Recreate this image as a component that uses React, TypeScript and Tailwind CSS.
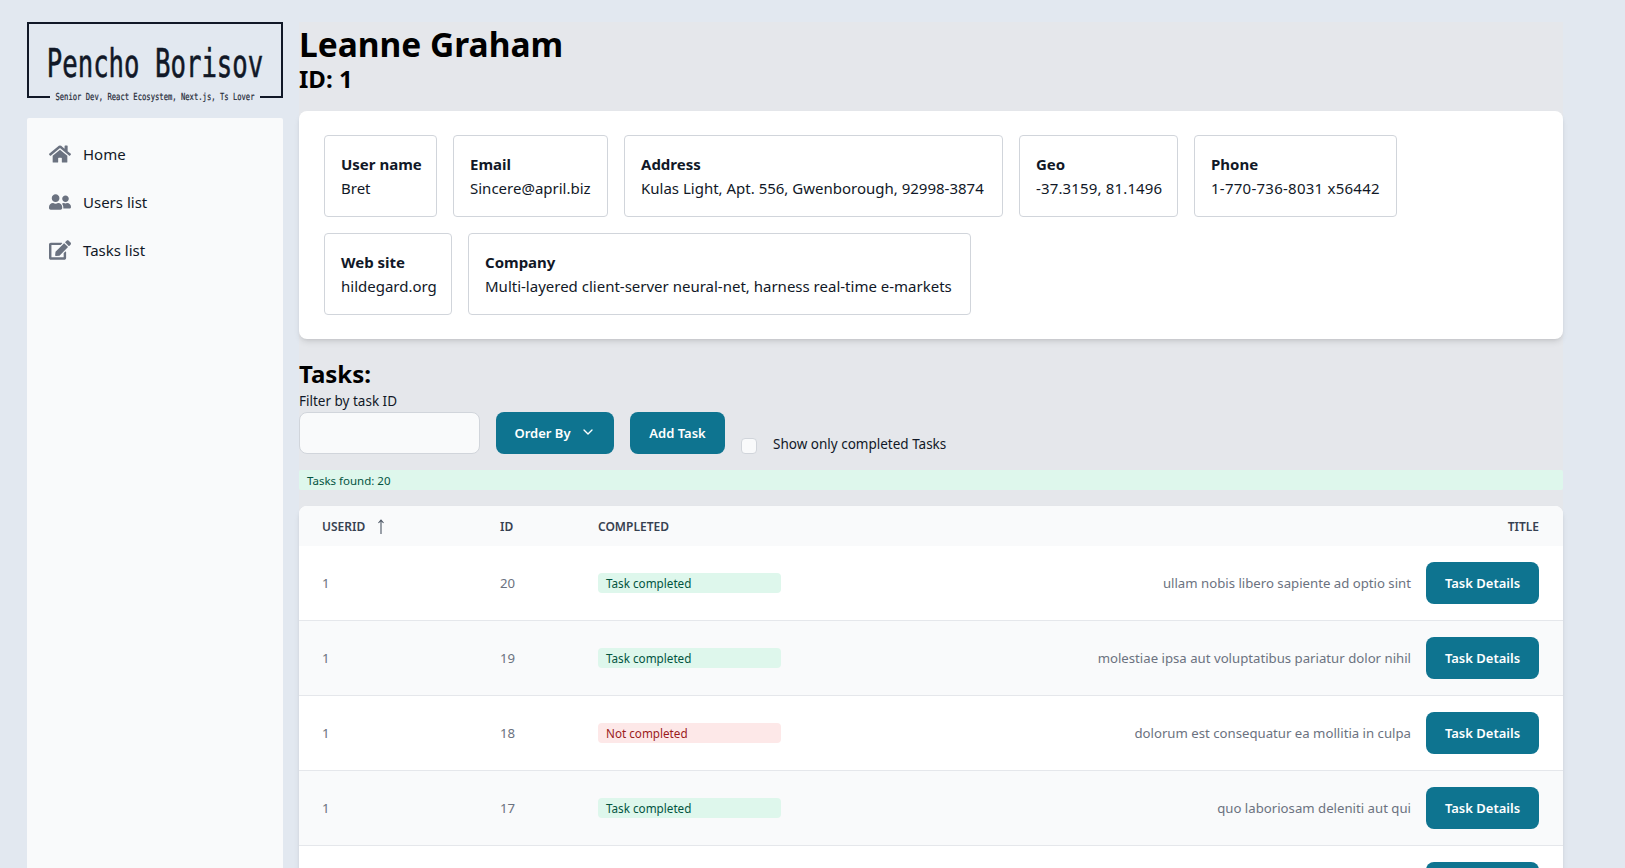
import React from 'react';
import { FaHome, FaUserFriends, FaEdit } from 'react-icons/fa';
import { ChevronDown } from 'lucide-react';

const font = { fontFamily: '"Noto Sans", sans-serif' };

const userFields = [
  [
    { label: 'User name', value: 'Bret', box: 'w-[113px]', val: '' },
    { label: 'Email', value: 'Sincere@april.biz', box: 'w-[155px]', val: '' },
    { label: 'Address', value: 'Kulas Light, Apt. 556, Gwenborough, 92998-3874', box: 'w-[379px]', val: '' },
    { label: 'Geo', value: '-37.3159, 81.1496', box: 'w-[159px]', val: 'tracking-[0.15px]' },
    { label: 'Phone', value: '1-770-736-8031 x56442', box: 'w-[203px]', val: 'tracking-[0.25px]' },
  ],
  [
    { label: 'Web site', value: 'hildegard.org', box: 'w-[128px]', val: '' },
    { label: 'Company', value: 'Multi-layered client-server neural-net, harness real-time e-markets', box: 'w-[503px]', val: '' },
  ],
];

const tasks = [
  { id: 20, done: true, title: 'ullam nobis libero sapiente ad optio sint' },
  { id: 19, done: true, title: 'molestiae ipsa aut voluptatibus pariatur dolor nihil' },
  { id: 18, done: false, title: 'dolorum est consequatur ea mollitia in culpa' },
  { id: 17, done: true, title: 'quo laboriosam deleniti aut qui' },
  { id: 16, done: true, title: 'sunt cum tempora' },
];

const Logo = () => (
  <div className="h-[76px] border-2 border-b-0 border-[#111827] flex flex-col items-center justify-between">
    <div className="mt-[29px] text-[25.7px] leading-[20px] scale-y-[1.5] text-[#111827] [-webkit-text-stroke:0.4px_#111827] font-['DejaVu_Sans_Mono',monospace] whitespace-nowrap">
      Pencho Borisov
    </div>
    <div className="flex items-center w-full h-[4px] gap-[5px] -mb-[1px]">
      <span className="h-[2px] flex-1 bg-[#111827]" />
      <span className="text-[7.2px] leading-[10px] scale-y-[1.35] text-[#1f2937] [-webkit-text-stroke:0.15px_#1f2937] font-['DejaVu_Sans_Mono',monospace] whitespace-nowrap">
        Senior Dev, React Ecosystem, Next.js, Ts Lover
      </span>
      <span className="h-[2px] flex-1 bg-[#111827]" />
    </div>
  </div>
);

const NavItem = ({ icon, label }: { icon: React.ReactNode; label: string }) => (
  <a className="flex items-center gap-[11px] h-[40px] pl-[21px] pr-[20px] text-[#111827] text-[15px]">
    <span className="w-[24px] flex justify-center text-[#6b7280]">{icon}</span>
    {label}
  </a>
);

export default function App() {
  return (
    <div style={font} className="h-screen overflow-hidden bg-[#e2e8f0] flex pl-[27px] pr-[62px] pt-[22px] gap-[16px]">
      <aside className="w-[256px] shrink-0 flex flex-col gap-[20px]">
        <Logo />
        <nav className="flex-1 bg-[#f9fafb] rounded-t-[2px] pt-[16px] flex flex-col gap-[8px]">
          <NavItem icon={<FaHome size={22} />} label="Home" />
          <NavItem icon={<FaUserFriends size={22} />} label="Users list" />
          <NavItem icon={<FaEdit size={22} />} label="Tasks list" />
        </nav>
      </aside>

      <main className="flex-1 min-w-0 bg-[#e5e7eb] text-black">
        <h1 className="pt-[3px] text-[33.5px] leading-[38px] font-bold box-content">Leanne Graham</h1>
        <h2 className="text-[24px] leading-[32px] font-bold">ID: 1</h2>

        <section className="mt-[16px] bg-white rounded-lg shadow-md py-[24px] pl-[25px] pr-[24px] flex flex-wrap gap-[16px]">
          {userFields.map((row, i) => (
            <div key={i} className="w-full flex gap-[16px]">
              {row.map((f) => (
                <div key={f.label} className={`${f.box} border border-[#d1d5db] rounded-[4px] p-[16px] h-[82px] whitespace-nowrap`}>
                  <div className="font-bold text-[15px] leading-[24px] text-[#111827]">{f.label}</div>
                  <div className={`${f.val} text-[15px] leading-[24px] text-[#111827]`}>{f.value}</div>
                </div>
              ))}
            </div>
          ))}
        </section>

        <h3 className="mt-[18px] text-[24px] leading-[34px] font-bold">Tasks:</h3>
        <label className="block text-[13.5px] leading-[21px] text-[#111827]">Filter by task ID</label>
        <div className="flex items-end gap-[16px]">
          <input className="w-[181px] h-[42px] bg-[#f9fafb] border border-[#d1d5db] rounded-lg" />
          <button className="h-[42px] w-[118px] pt-[1px] bg-[#0e7490] text-white text-[13px] font-semibold rounded-lg flex items-center justify-center gap-[9px]">
            Order By <ChevronDown size={16} className="-mt-[3px]" />
          </button>
          <button className="h-[42px] w-[95px] pt-[1px] bg-[#0e7490] text-white text-[13px] font-semibold rounded-lg">
            Add Task
          </button>
          <label className="flex items-end gap-[16px] text-[13.5px] leading-[20px] text-[#111827]">
            <span className="w-[16px] h-[16px] bg-[#f9fafb] border border-[#d1d5db] rounded-[4px]" />
            Show only completed Tasks
          </label>
        </div>

        <div className="mt-[16px] h-[20px] bg-[#def7ec] text-[#03543f] text-[11.5px] leading-[21px] px-[8px] rounded-[2px]">
          Tasks found: 20
        </div>

        <div className="mt-[16px] bg-white rounded-lg shadow-md overflow-hidden">
          <table className="w-full border-collapse">
            <thead>
              <tr className="h-[40px] bg-[#f9fafb] text-[#374151] text-[12px] uppercase">
                <th className="w-[177px] pl-[23px] pt-[2px] text-left font-semibold">
                  <span className="flex items-center gap-[8px]">
                    userId
                    <svg width="16" height="16" viewBox="0 0 16 16" fill="none" stroke="#4b5563" strokeWidth="1.1">
                      <path d="M8 15V1M5.5 4 8 1l2.5 3" />
                    </svg>
                  </span>
                </th>
                <th className="w-[98px] pl-[24px] pt-[2px] text-left font-semibold">id</th>
                <th className="w-[230px] pl-[24px] pt-[2px] text-left font-semibold">completed</th>
                <th className="pr-[24px] pt-[2px] text-right font-semibold">title</th>
              </tr>
            </thead>
            <tbody>
              {tasks.map((t, i) => (
                <tr key={t.id} className={`border-b border-[#e5e7eb] text-[13.2px] text-[#6b7280] ${i % 2 ? 'bg-[#f9fafb]' : 'bg-white'}`}>
                  <td className="pl-[23px] pt-[2px]">1</td>
                  <td className="pl-[24px] pt-[2px]">{t.id}</td>
                  <td className="pl-[24px]">
                    {t.done ? (
                      <span className="block w-[183px] h-[20px] rounded-[4px] px-[8px] text-[11.7px] leading-[20px] bg-[#def7ec] text-[#03543f]">
                        Task completed
                      </span>
                    ) : (
                      <span className="block w-[183px] h-[20px] rounded-[4px] px-[8px] text-[11.7px] leading-[20px] bg-[#fde8e8] text-[#9b1c1c]">
                        Not completed
                      </span>
                    )}
                  </td>
                  <td className="pr-[24px] py-[16px]">
                    <div className="flex items-center justify-end gap-[15px]">
                      <span className="pt-[2px]">{t.title}</span>
                      <button className="h-[42px] w-[113px] pt-[1px] bg-[#0e7490] text-white text-[13px] font-semibold rounded-lg">
                        Task Details
                      </button>
                    </div>
                  </td>
                </tr>
              ))}
            </tbody>
          </table>
        </div>
      </main>
    </div>
  );
}
